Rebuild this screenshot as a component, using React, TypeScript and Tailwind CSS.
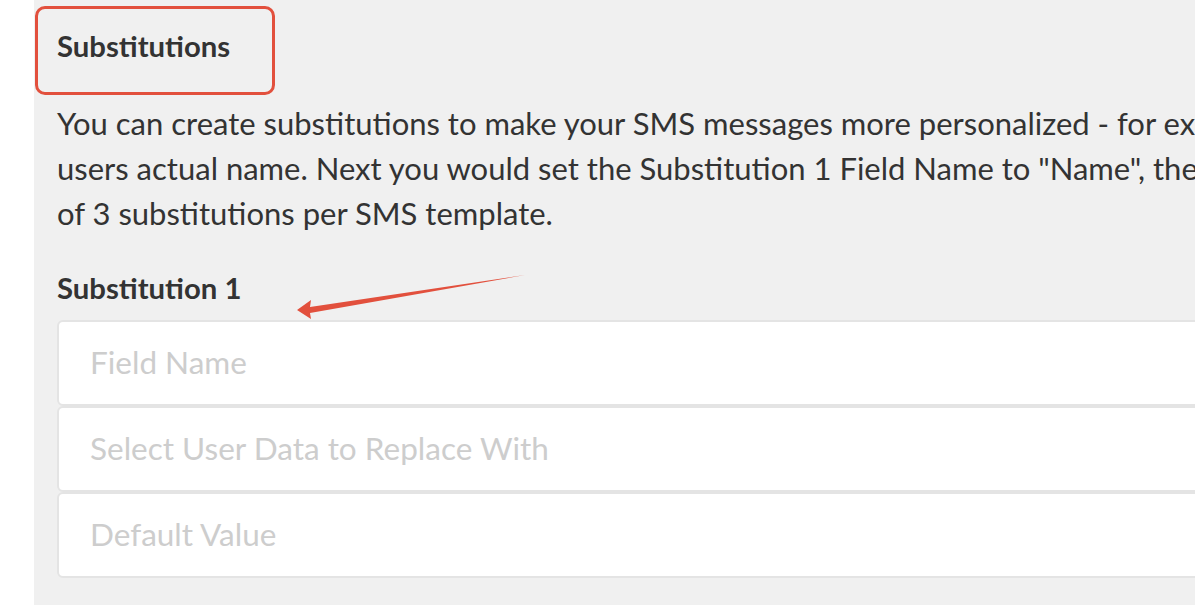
import React from "react";

const lines = [
  'You can create substitutions to make your SMS messages more personalized - for example, you could add a substitution',
  'users actual name. Next you would set the Substitution 1 Field Name to "Name", then select',
  'of 3 substitutions per SMS template.',
];

function Field({ placeholder }: { placeholder: string }) {
  return (
    <div className="h-[86px] w-[1200px] rounded-[6px] border-2 border-[#e4e4e4] bg-white flex items-center pl-[31px]">
      <span className="text-[31.5px] text-[#cdcdcd] whitespace-nowrap">{placeholder}</span>
    </div>
  );
}

export default function App() {
  return (
    <div
      className="w-[1195px] h-[605px] bg-white overflow-hidden flex"
      style={{ fontFamily: "Lato, 'Noto Sans', sans-serif" }}
    >
      <div className="w-[34px] shrink-0 bg-white" />
      <div className="flex-1 bg-[#f0f0f0] relative overflow-hidden">
        <div className="absolute left-[1px] top-[6px] w-[240px] h-[89px] rounded-[10px] border-[3px] border-[#e2503d]" />
        <svg
          className="absolute left-0 top-0 z-10"
          width="1161"
          height="605"
          viewBox="34 0 1161 605"
        >
          <polygon
            points="525,275 310,307 311,300 297,310 311,319 310,313"
            fill="#e2503d"
          />
        </svg>
        <div className="pl-[23px] pt-[26px]">
          <div className="text-[29.3px] font-bold text-[#333333] leading-[40px]">Substitutions</div>
          <div className="mt-[35px] text-[31px] text-[#333333] leading-[45px]">
            {lines.map((l, i) => (
              <div key={i} className="whitespace-nowrap">{l}</div>
            ))}
          </div>
          <div className="mt-[32px] text-[29.3px] font-bold text-[#333333] leading-[40px]">Substitution 1</div>
          <div className="mt-[12px] flex flex-col">
            <Field placeholder="Field Name" />
            <Field placeholder="Select User Data to Replace With" />
            <Field placeholder="Default Value" />
          </div>
        </div>
      </div>
    </div>
  );
}
